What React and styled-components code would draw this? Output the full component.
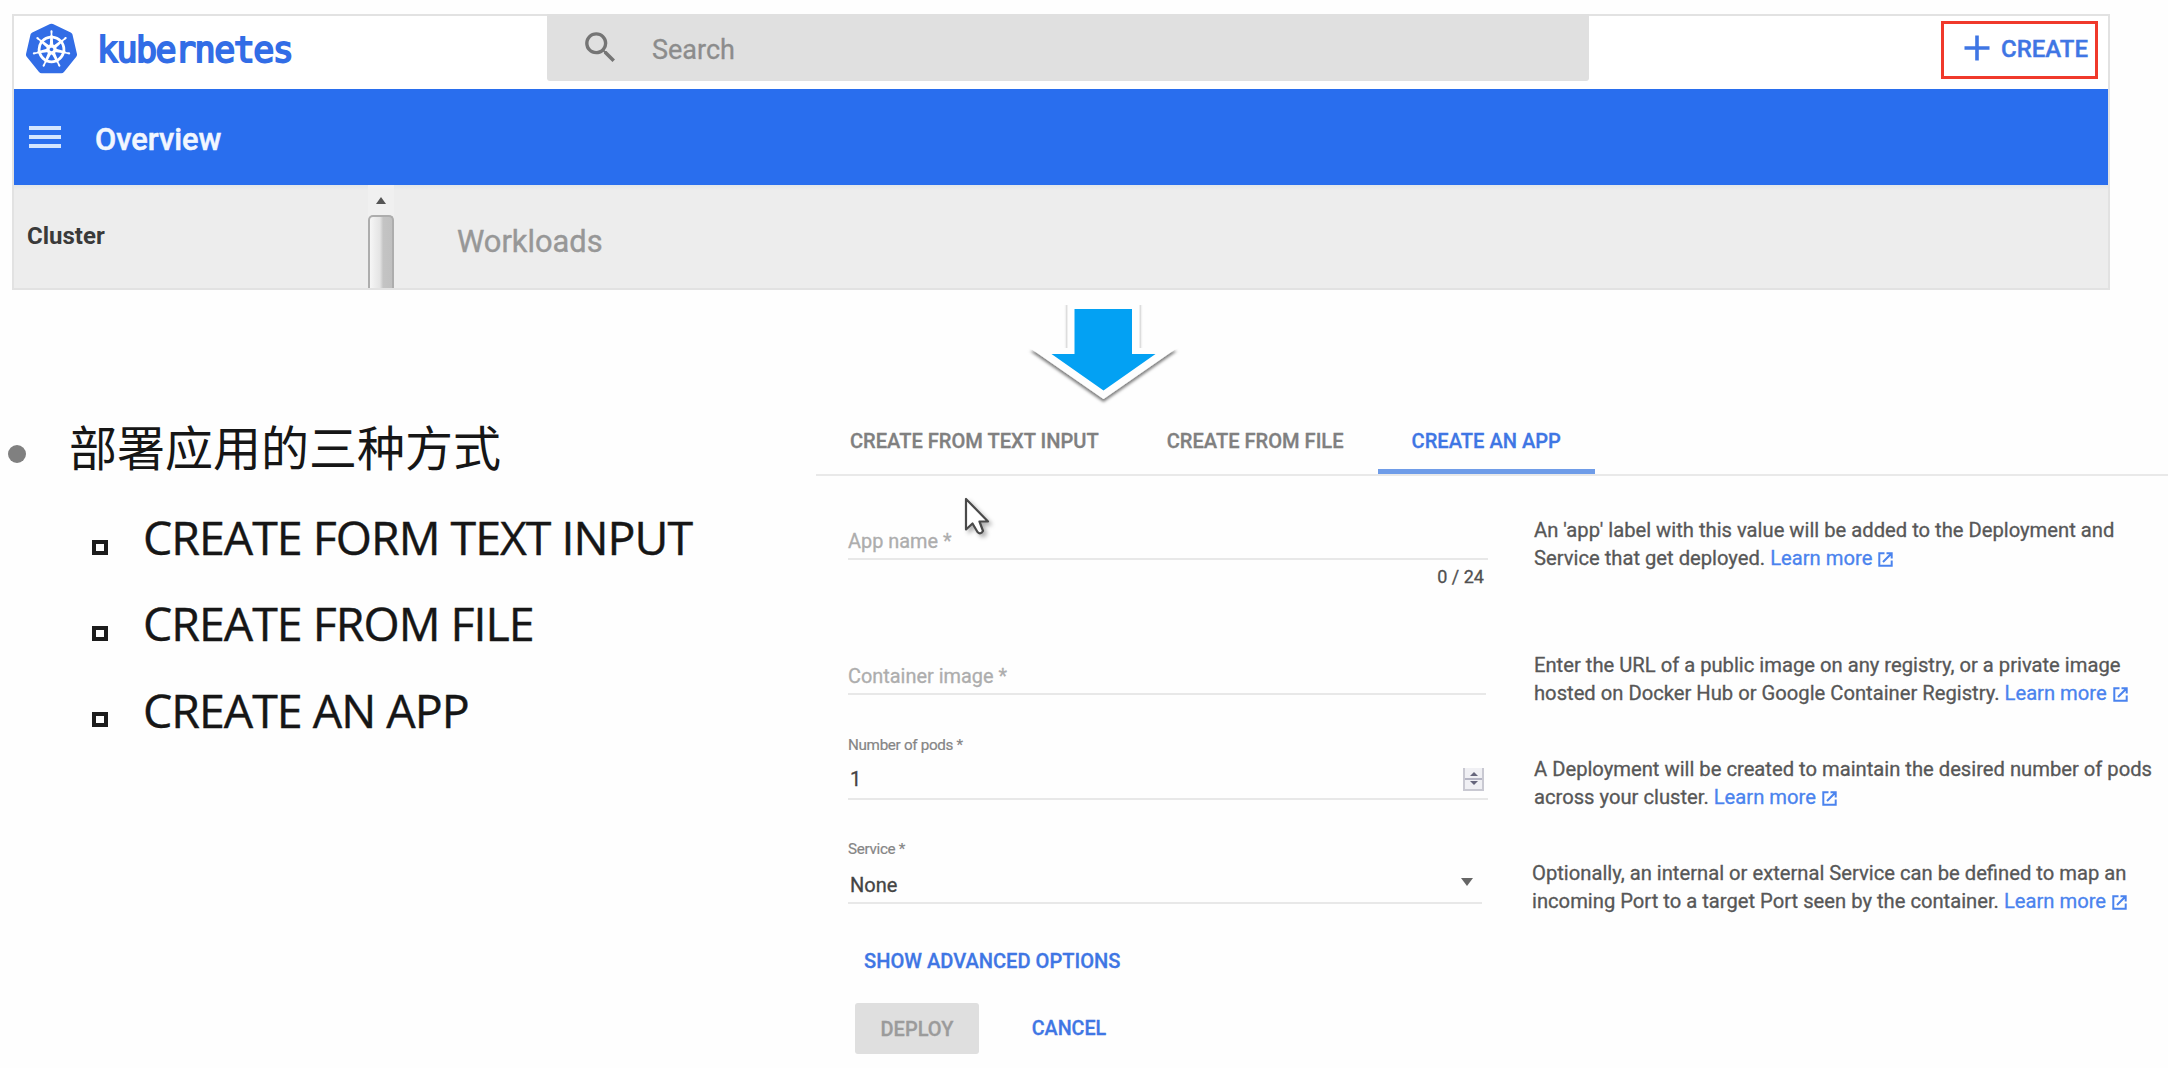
import React from "react";
import styled, { createGlobalStyle, css } from "styled-components";
import { MdSearch } from "react-icons/md";
import { SiKubernetes } from "react-icons/si";

const Global = createGlobalStyle`
  * { box-sizing: border-box; }
  body { margin: 0; background: #fefefe; font-family: Roboto, "Liberation Sans", sans-serif; }
`;

const blue = "#3f76e4";

const Page = styled.main`
  position: relative;
  width: 2168px;
  height: 1068px;
  padding-top: 14px;
  overflow: hidden;
`;

/* Dashboard panel */
const Dashboard = styled.section`
  width: 2098px;
  height: 276px;
  margin-left: 12px;
  border: 2px solid #e2e2e2;
  background: #fff;
`;
const Header = styled.header`
  display: flex;
  height: 73px;
  padding-right: 10px;
`;
const Brand = styled.div`
  display: flex;
  width: 533px;
  padding-left: 12px;
  color: #326de6;
  svg { margin-top: 7px; }
`;
const BrandName = styled.span`
  margin-left: 20px;
  font: 35px/68px "DejaVu Sans Mono", monospace;
  letter-spacing: -1.55px;
  -webkit-text-stroke: 1.8px #326de6;
`;
const SearchBox = styled.div`
  display: flex;
  align-items: center;
  width: 1042px;
  height: 67px;
  margin-top: -2px;
  padding-left: 33px;
  border-radius: 0 0 3px 3px;
  background: #e0e0e0;
  color: #757575;
`;
const SearchHint = styled.span`
  margin-left: 31px;
  padding-top: 4px;
  font-size: 27px;
  color: #8c8c8c;
  -webkit-text-stroke: 0.3px;
`;
const CreateButton = styled.button`
  display: flex;
  align-items: center;
  width: 157px;
  height: 58px;
  margin: 5px 0 0 auto;
  padding: 0 0 5px 20px;
  border: 3px solid #f0392b;
  background: #fff;
  font: 500 24px Roboto, sans-serif;
  color: ${blue};
  -webkit-text-stroke: 0.4px;
  span { margin: 2px 0 0 11px; }
`;
const TitleBar = styled.div`
  display: flex;
  align-items: center;
  height: 96px;
  padding-left: 15px;
  background: #296eee;
  color: #f1f6ff;
`;
const Menu = styled.div`
  display: flex;
  flex-direction: column;
  justify-content: space-between;
  width: 32px;
  height: 22px;
`;
const MenuBar = styled.i`
  height: 4px;
  background: #d3e5ff;
`;
const TitleText = styled.h1`
  margin: 5px 0 0 34px;
  font-size: 30.8px;
  font-weight: 500;
  -webkit-text-stroke: 0.5px;
`;
const Body = styled.div`
  display: flex;
  height: 103px;
  background: linear-gradient(#e2e6e9, #ededed 5px);
`;
const Sidebar = styled.nav`
  width: 354px;
  padding-left: 13px;
  font-size: 24px;
  font-weight: 700;
  line-height: 102px;
  color: #3a3a3a;
`;
const Scrollbar = styled.div`
  display: flex;
  flex-direction: column;
  align-items: center;
  width: 26px;
  padding-top: 12px;
  background: #f0f0f0;
`;
const ScrollUp = styled.i`
  border: 5px solid transparent;
  border-top: 0;
  border-bottom: 7px solid #555;
`;
const Thumb = styled.i`
  flex: 1;
  width: 26px;
  margin-top: 11px;
  border: 2px solid #adadad;
  border-bottom: 0;
  border-radius: 5px 5px 0 0;
  background: linear-gradient(90deg, #f6f6f6, #e4e4e4 45%, #c4c4c4 60%, #c0c0c0);
`;
const Workloads = styled.h2`
  margin: 0 0 0 63px;
  font-size: 30.8px;
  font-weight: 400;
  line-height: 114px;
  color: #979797;
  -webkit-text-stroke: 0.4px;
`;

/* Arrow between the panel and the form */
const ArrowRow = styled.div`
  height: 115px;
  padding-left: 1013px;
`;

const Lower = styled.div`
  display: grid;
  grid-template-columns: 816px 1fr;
`;

/* Outline */
const Outline = styled.section`
  padding: 10px 0 0 8px;
  color: #161616;
`;
const Heading = styled.div`
  display: flex;
  align-items: center;
  height: 60px;
  font: 48px/60px "Noto Sans CJK SC", sans-serif;
`;
const Dot = styled.i`
  width: 18px;
  height: 18px;
  margin: 18px 43px 0 0;
  border-radius: 50%;
  background: #808080;
`;
const Items = styled.ul`
  margin: 19px 0 0;
  padding: 0 0 0 84px;
  list-style: none;
`;
const Item = styled.li`
  display: flex;
  align-items: center;
  height: 86.3px;
  font: 46.5px/86px "Open Sans", sans-serif;
  letter-spacing: -1px;
  -webkit-text-stroke: 0.4px;
  white-space: nowrap;
`;
const Square = styled.i`
  width: 16px;
  height: 15px;
  margin: 20px 35px 0 0;
  border: 4px solid #1c1c1c;
`;

/* Form */
const Tabs = styled.div`
  display: flex;
  height: 71px;
  border-bottom: 2px solid #e9e9e9;
`;
const Tab = styled.div`
  height: 69px;
  padding: 0 34px;
  font-size: 20.1px;
  font-weight: 500;
  line-height: 72px;
  white-space: nowrap;
  color: #808080;
  -webkit-text-stroke: 0.3px;
  ${(p) => p.$active && css`
    color: ${blue};
    border-bottom: 5px solid #6f9ce8;
  `}
`;
const Form = styled.div`
  padding: 18px 0 0 32px;
`;
const Row = styled.div`
  display: grid;
  grid-template-columns: 640px 1fr;
  column-gap: ${(p) => p.$gap || 46}px;
  height: ${(p) => p.$height}px;
`;
const FieldLabel = styled.div`
  height: 20px;
  font-size: 15.2px;
  line-height: 23px;
  letter-spacing: -0.3px;
  color: #858585;
  -webkit-text-stroke: 0.2px;
`;
const Control = styled.div`
  display: flex;
  justify-content: space-between;
  width: ${(p) => p.$width || 640}px;
  height: 46px;
  padding: ${(p) => p.$top || 10}px 0 0 ${(p) => (p.$filled ? 2 : 0)}px;
  border-bottom: 2px solid #e8e8e8;
  font-size: ${(p) => (p.$filled ? 20 : 19.9)}px;
  line-height: 34px;
  color: ${(p) => (p.$filled ? "#444" : "#adadad")};
  -webkit-text-stroke: 0.3px;
`;
const Counter = styled.div`
  padding: 3px 4px 0 0;
  font-size: 18px;
  line-height: 27px;
  text-align: right;
  color: #505050;
  -webkit-text-stroke: 0.3px;
`;
const Help = styled.p`
  margin: ${(p) => p.$top || 22}px 0 0;
  font-size: 20.2px;
  line-height: 28.2px;
  white-space: nowrap;
  color: #575757;
  -webkit-text-stroke: 0.3px;
`;
const Link = styled.a`
  color: #4a83ee;
  svg { margin-left: 1px; vertical-align: -2px; }
`;
const Spinner = styled.div`
  display: flex;
  flex-direction: column;
  justify-content: space-evenly;
  align-items: center;
  width: 21px;
  height: 23px;
  margin: 6px 4px 0 0;
  border: 2px solid #c9c9d2;
  border-top: 0;
  background: linear-gradient(#f0f0f4 10px, #b5b5c4 10px, #b5b5c4 12px, #f0f0f4 12px);
`;
const Caret = styled.i`
  border: ${(p) => p.$size}px solid transparent;
  ${(p) => p.$up
    ? css`border-top: 0; border-bottom-color: #66667c;`
    : css`border-bottom: 0; border-top-color: #66667c;`}
`;
const SelectCaret = styled.i`
  align-self: flex-start;
  margin: 10px 9px 0 0;
  border: 6.5px solid transparent;
  border-top: 8px solid #666;
  border-bottom: 0;
`;
const Advanced = styled.div`
  margin: 17px 0 0 16px;
  font-size: 20.1px;
  font-weight: 500;
  line-height: 40px;
  color: ${blue};
  -webkit-text-stroke: 0.3px;
`;
const Actions = styled.div`
  display: flex;
  margin: 22px 0 0 7px;
`;
const Action = styled.button`
  width: ${(p) => (p.$raised ? 124 : 180)}px;
  height: 51px;
  padding: 0;
  border: 0;
  border-radius: 3px;
  background: ${(p) => (p.$raised ? "#dfdfdf" : "transparent")};
  font: 500 ${(p) => (p.$raised ? 20 : 19.7)}px Roboto, sans-serif;
  color: ${(p) => (p.$raised ? "#9b9b9b" : blue)};
  -webkit-text-stroke: 0.3px;
`;
const Pointer = styled.svg`
  position: absolute;
  left: 962px;
  top: 495px;
  filter: drop-shadow(3px 3px 2px rgba(0, 0, 0, 0.3));
`;

const LearnMore = () => (
  <Link>
    Learn more{" "}
    <svg width="15" height="15" viewBox="0 0 15 15" fill="none" stroke="currentColor" strokeWidth="2">
      <path d="M6.500 1.300H1.300V13.700H13.700V8.500M8.500 1.300H13.700V6.500M13.200 1.800L5 10" />
    </svg>
  </Link>
);

export default function App() {
  return (
    <Page>
      <Global />
      <Dashboard>
        <Header>
          <Brand>
            <SiKubernetes size={51} />
            <BrandName>kubernetes</BrandName>
          </Brand>
          <SearchBox>
            <MdSearch size={41} />
            <SearchHint>Search</SearchHint>
          </SearchBox>
          <CreateButton>
            <svg width="26" height="26" viewBox="0 0 26 26">
              <path d="M13 0.5v25M0.5 13h25" stroke="currentColor" strokeWidth="3.6" />
            </svg>
            <span>CREATE</span>
          </CreateButton>
        </Header>
        <TitleBar>
          <Menu><MenuBar /><MenuBar /><MenuBar /></Menu>
          <TitleText>Overview</TitleText>
        </TitleBar>
        <Body>
          <Sidebar>Cluster</Sidebar>
          <Scrollbar><ScrollUp /><Thumb /></Scrollbar>
          <Workloads>Workloads</Workloads>
        </Body>
      </Dashboard>

      <ArrowRow>
        <svg width="182" height="122" viewBox="1013 290 182 122">
          <defs>
            <filter id="shade" x="-20%" y="-20%" width="140%" height="140%">
              <feDropShadow dx="0" dy="3" stdDeviation="1.800" floodOpacity="0.5" />
            </filter>
            <clipPath id="below"><path d="M1013 305H1195V412H1013Z" /></clipPath>
          </defs>
          <g clipPath="url(#below)">
            <path d="M1067.500 300H1139.500V348H1177L1103.500 399L1030 348H1067.500Z" fill="#fefefe" filter="url(#shade)" />
          </g>
          <path d="M1062 290H1145V305H1062Z" fill="#fefefe" />
          <path d="M1074.500 309H1132V354H1155.500L1103.500 390.500L1051.500 354H1074.500Z" fill="#03a1f3" />
        </svg>
      </ArrowRow>

      <Lower>
        <Outline>
          <Heading><Dot />部署应用的三种方式</Heading>
          <Items>
            <Item><Square />CREATE FORM TEXT INPUT</Item>
            <Item><Square />CREATE FROM FILE</Item>
            <Item><Square />CREATE AN APP</Item>
          </Items>
        </Outline>

        <section>
          <Tabs>
            <Tab>CREATE FROM TEXT INPUT</Tab>
            <Tab>CREATE FROM FILE</Tab>
            <Tab $active>CREATE AN APP</Tab>
          </Tabs>
          <Form>
            <Row $height={135}>
              <div>
                <FieldLabel />
                <Control $top={11}>App name *</Control>
                <Counter>0 / 24</Counter>
              </div>
              <Help>
                An 'app' label with this value will be added to the Deployment and<br />
                Service that get deployed. <LearnMore />
              </Help>
            </Row>
            <Row $height={105}>
              <div>
                <FieldLabel />
                <Control $width={638} $top={11}>Container image *</Control>
              </div>
              <Help>
                Enter the URL of a public image on any registry, or a private image<br />
                hosted on Docker Hub or Google Container Registry. <LearnMore />
              </Help>
            </Row>
            <Row $height={104}>
              <div>
                <FieldLabel>Number of pods *</FieldLabel>
                <Control $filled $top={8}>
                  1
                  <Spinner><Caret $up $size={4} /><Caret $size={4} /></Spinner>
                </Control>
              </div>
              <Help $top={21}>
                A Deployment will be created to maintain the desired number of pods<br />
                across your cluster. <LearnMore />
              </Help>
            </Row>
            <Row $height={86} $gap={44}>
              <div>
                <FieldLabel>Service *</FieldLabel>
                <Control $filled $width={634}>
                  None
                  <SelectCaret />
                </Control>
              </div>
              <Help $top={21}>
                Optionally, an internal or external Service can be defined to map an<br />
                incoming Port to a target Port seen by the container. <LearnMore />
              </Help>
            </Row>
            <Advanced>SHOW ADVANCED OPTIONS</Advanced>
            <Actions>
              <Action $raised>DEPLOY</Action>
              <Action>CANCEL</Action>
            </Actions>
          </Form>
        </section>
      </Lower>

      <Pointer width="32" height="44" viewBox="0 0 32 44">
        <path d="M4 4V34.500L10.500 28.500L15.500 37Q18.500 40 21 36L17.500 26.500H26Z" fill="#fff" stroke="#4a4a4a" strokeWidth="2.200" strokeLinejoin="round" />
      </Pointer>
    </Page>
  );
}
